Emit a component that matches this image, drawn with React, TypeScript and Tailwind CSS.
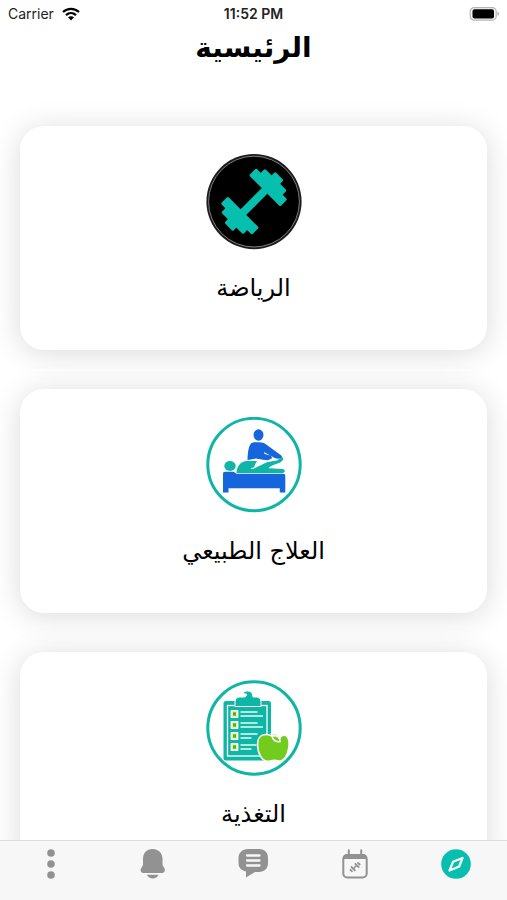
import type { ReactNode } from 'react';

const DumbbellIcon = () => (
  <svg viewBox="0 0 96 96" className="size-24" aria-hidden="true">
    <circle cx="48" cy="47.6" r="47.6" fill="#1c1c1c" />
    <circle cx="48" cy="47.6" r="45.4" fill="#000" stroke="#8a8a8a" strokeWidth="0.9" />
    <g transform="translate(48 47.5) rotate(-45)" fill="#06bfae">
      <rect x="-18" y="-4" width="36" height="8" />
      <rect x="-25" y="-22" width="10" height="44" rx="1.5" />
      <rect x="-31" y="-15.500" width="9" height="31" rx="1.5" />
      <rect x="-36" y="-6" width="8" height="12" rx="1.5" />
      <rect x="15" y="-22" width="10" height="44" rx="1.5" />
      <rect x="22" y="-15.500" width="9" height="31" rx="1.5" />
      <rect x="28" y="-6" width="8" height="12" rx="1.5" />
    </g>
  </svg>
);

const TherapyIcon = () => (
  <svg viewBox="0 0 96 96" className="size-24" aria-hidden="true">
    <circle cx="48" cy="47.500" r="46.2" fill="#fff" stroke="#0fb5a5" strokeWidth="3" />
    <g fill="#1565dc">
      <ellipse cx="52.500" cy="18" rx="5" ry="5.700" />
      <path d="M41.500 43c.3-7 .8-11.500 2.500-15 1-2.300 3-2.700 6-2.700 5 0 7.500.2 9.500 1.700l15.500 11.300c1.500 1.200 1 3-1 3.300-3 .4-5-.2-7-1.600l-9-5 .5 2 5 1.200c1.800.5 2.500 1.500 2.500 3l-4 2-7-.7-5-1-5 1z" />
      <path d="M17 57c0-1.500.8-2.300 2.200-2.300h8.300l3 2H77c1.500 0 2.300.8 2.300 2.300V75.500H73.800V71.300H22.500v4.200H17z" />
    </g>
    <g fill="#0fb5a5">
      <ellipse cx="24" cy="49" rx="5.700" ry="5" />
      <path d="M30.500 55.500c.5-6 4-11 9.500-11.500h12.500l-4.500 7.500 13.500-6.500 9.500-1.500 4-3c2-.8 3.300 1.300 1 3.500-1 1.100-2.500 1.800-4.500 2.500l-12 4.500 17 1c3 .3 3 4 0 4H31c-.4 0-.5-.2-.5-.5z" />
      <path d="M50 51.500l10-5.500 6 1.500-4 4.500z" />
    </g>
    <path d="M45.500 51.500c3-.2 3.500-1.500 4.500-4.500.8-2.300 1.500-3.500 4-4l6 1.500 6-1" fill="none" stroke="#fff" strokeWidth="1.200" strokeLinecap="round" />
  </svg>
);

const NutritionIcon = () => (
  <svg viewBox="0 0 96 96" className="size-24" aria-hidden="true">
    <circle cx="48" cy="48" r="46.2" fill="#fff" stroke="#0fb5a5" strokeWidth="3" />
    <rect x="17.500" y="21" width="47.500" height="59.500" rx="2.500" fill="#0fb5a5" />
    <rect x="21.500" y="25.500" width="39.500" height="50.500" fill="none" stroke="#fff" strokeWidth="1.300" />
    <path d="M29 26.500v-4.500c0-3 1.500-5 4.500-5h4.500c2 0 2.500-1.500 2.500-3h-2.800V12c3.500-2 7.800-1 8.800 2l.5 3h3.500c3 0 4.500 2 4.500 5v4.500z" fill="#0fb5a5" stroke="#fff" strokeWidth="1" />
    <path d="M34.500 32h17M34.500 36h22.500M34.500 43h17M34.500 47h22.500M34.500 54h17M34.500 58h11M34.500 65h16M34.500 69h11" stroke="#e6fbf8" strokeWidth="1.400" />
    {[30.500, 41.500, 52.500, 63.500].map((y) => (
      <g key={y}>
        <rect x="25.200" y={y} width="6.600" height="7" rx=".5" fill="#dcf5a8" stroke="#fff" strokeWidth="1.200" />
        <rect x="27" y={y + 1.8} width="3" height="3.400" fill="#59b300" />
      </g>
    ))}
    <path d="M51.500 64c0-5.500 3-9.500 8.500-9.500 3.500 0 5 1.300 7.500 2l-2-2.500c4.500-.7 7 1 8.500 4 .5-2.500 4-3.700 6.500-2 2.500 2.500 3 6.500 2.300 11-.7 7-4 14-9.300 14-2.500 0-3.500-.8-5.500-.8s-3.500 1-6 1c-6.500 0-10.500-8.500-10.500-17.200z" fill="#72cc1e" stroke="#fff" strokeWidth="1.500" />
    <path d="M66 56c1 4.200 4 6.200 8.200 5.500-.2-4-3.200-6.500-8.200-5.500z" fill="#72cc1e" stroke="#fff" strokeWidth="1.500" />
  </svg>
);

const MoreIcon = () => (
  <svg viewBox="0 0 30 30" className="size-[30px]" fill="#929292" aria-hidden="true">
    <circle cx="15" cy="4" r="3.800" />
    <circle cx="15" cy="15" r="3.800" />
    <circle cx="15" cy="26" r="3.800" />
  </svg>
);

const BellIcon = () => (
  <svg viewBox="0 0 30 30" className="size-[30px]" fill="#929292" aria-hidden="true">
    <path d="M15.500 0C9.500 0 6 4.300 6 10v6l-2 3.500c-1 2 0 4.500 2.500 4.500h18.500c2.500 0 3.500-2.500 2.500-4.500l-2-3.500v-6C25.500 4.300 21.500 0 15.500 0z" />
    <path d="M10 25.800h11.500c-1.200 2.500-3.200 3.800-5.800 3.800s-4.500-1.300-5.700-3.800z" />
  </svg>
);

const ChatIcon = () => (
  <svg viewBox="0 0 30 30" className="size-[30px]" aria-hidden="true">
    <path d="M10 0h11c6 0 9 4 9 9v5c0 5.500-3.500 9-9 9h-4l-9 5.500v-6C3 21.500.5 18 .5 14V9c0-5 3.500-9 9.500-9z" fill="#929292" />
    <path d="M9 6.500h12.500M9 11.500h12.500M9 16.500h12.500" stroke="#f7f7f7" strokeWidth="2.300" strokeLinecap="round" />
  </svg>
);

const CalendarIcon = () => (
  <svg viewBox="0 0 30 30" className="size-[30px]" fill="none" stroke="#929292" aria-hidden="true">
    <rect x="3.300" y="6" width="23.400" height="22.500" rx="4" strokeWidth="2" />
    <path d="M3.500 9.500V8.500c0-2 1.500-3 3.500-3h16c2 0 3.500 1 3.500 3v1z" fill="#929292" />
    <path d="M8.800 1.300v5M21.200 1.300v5" strokeWidth="2" strokeLinecap="round" />
    <path d="M13 20l4-4" strokeWidth="1.600" />
    <path d="M11 17.500l4.400 4.400M10 20.300l2.500 2.500M14.800 14.300l4.400 4.400M17.500 13.300l2.700 2.700" strokeWidth="1.800" />
  </svg>
);

const CompassIcon = () => (
  <svg viewBox="0 0 30 30" className="size-[30px]" aria-hidden="true">
    <circle cx="15" cy="15" r="14.800" fill="#06bfae" />
    <path d="M21.500 9L18.200 17.500 8.500 21.500 12 12.800z" fill="none" stroke="#fff" strokeWidth="2.200" strokeLinejoin="round" />
  </svg>
);

const categories = [
  { title: 'الرياضة', icon: <DumbbellIcon /> },
  { title: 'العلاج الطبيعي', icon: <TherapyIcon /> },
  { title: 'التغذية', icon: <NutritionIcon /> },
];

const tabs = [
  { label: 'استكشاف', icon: <CompassIcon /> },
  { label: 'المواعيد', icon: <CalendarIcon /> },
  { label: 'المحادثات', icon: <ChatIcon /> },
  { label: 'الإشعارات', icon: <BellIcon /> },
  { label: 'المزيد', icon: <MoreIcon /> },
];

function StatusBar() {
  return (
    <div dir="ltr" className="grid h-7 grid-cols-3 items-center px-2 font-['Inter',sans-serif] text-sm text-[#222]">
      <div className="flex items-center gap-2">
        Carrier
        <svg viewBox="0 0 18 14" className="h-3.5 w-[18px]" aria-hidden="true">
          <path d="M1 5c4.500-4.300 11.500-4.300 16 0M4 8.200c2.900-2.700 7.100-2.700 10 0" fill="none" stroke="#000" strokeWidth="2.300" />
          <path d="M6 10.300c1.800-1.500 4.200-1.500 6 0l-3 3.200z" />
        </svg>
      </div>
      <div className="text-center font-semibold">11:52 PM</div>
      <div className="flex justify-end">
        <svg viewBox="0 0 30 14" className="h-3.5 w-[30px]" aria-hidden="true">
          <rect x="1.200" y=".6" width="26" height="12.600" rx="4" fill="#f4f4f4" stroke="#b5b5b5" strokeWidth="1.200" />
          <rect x="3.500" y="2.200" width="21.500" height="9.400" rx="2" />
          <path d="M28.500 4.800c2 .8 2 3.200 0 4z" fill="#aaa" />
        </svg>
      </div>
    </div>
  );
}

function CategoryCard({ title, icon }: { title: string; icon: ReactNode }) {
  return (
    <li className="border-b-2 border-transparent px-5 pt-[18px] pb-[19px] first:relative first:border-white">
      <button className="flex h-56 w-full flex-col items-center rounded-3xl bg-white pt-7 shadow-[0_3px_30px_rgba(0,0,0,0.15)]">
        {icon}
        <span className="mt-5 text-2xl leading-9">{title}</span>
      </button>
    </li>
  );
}

export default function App() {
  return (
    <div dir="rtl" className="flex h-screen flex-col overflow-hidden bg-white font-['DejaVu_Sans',sans-serif] text-black">
      <StatusBar />
      <h1 className="text-center text-[28px] leading-10 font-bold">الرئيسية</h1>

      <main className="min-h-0 flex-1 overflow-hidden pt-10">
        <ul>
          {categories.map((c) => (
            <CategoryCard key={c.title} title={c.title} icon={c.icon} />
          ))}
        </ul>
      </main>

      {/* Bottom tabs */}
      <nav className="flex h-[60px] shrink-0 justify-around border-t border-[#dcdcdc] bg-[#f7f7f7] pt-2">
        {tabs.map((tab) => (
          <button key={tab.label} aria-label={tab.label} className="flex flex-1 items-start justify-center">
            {tab.icon}
          </button>
        ))}
      </nav>
    </div>
  );
}
